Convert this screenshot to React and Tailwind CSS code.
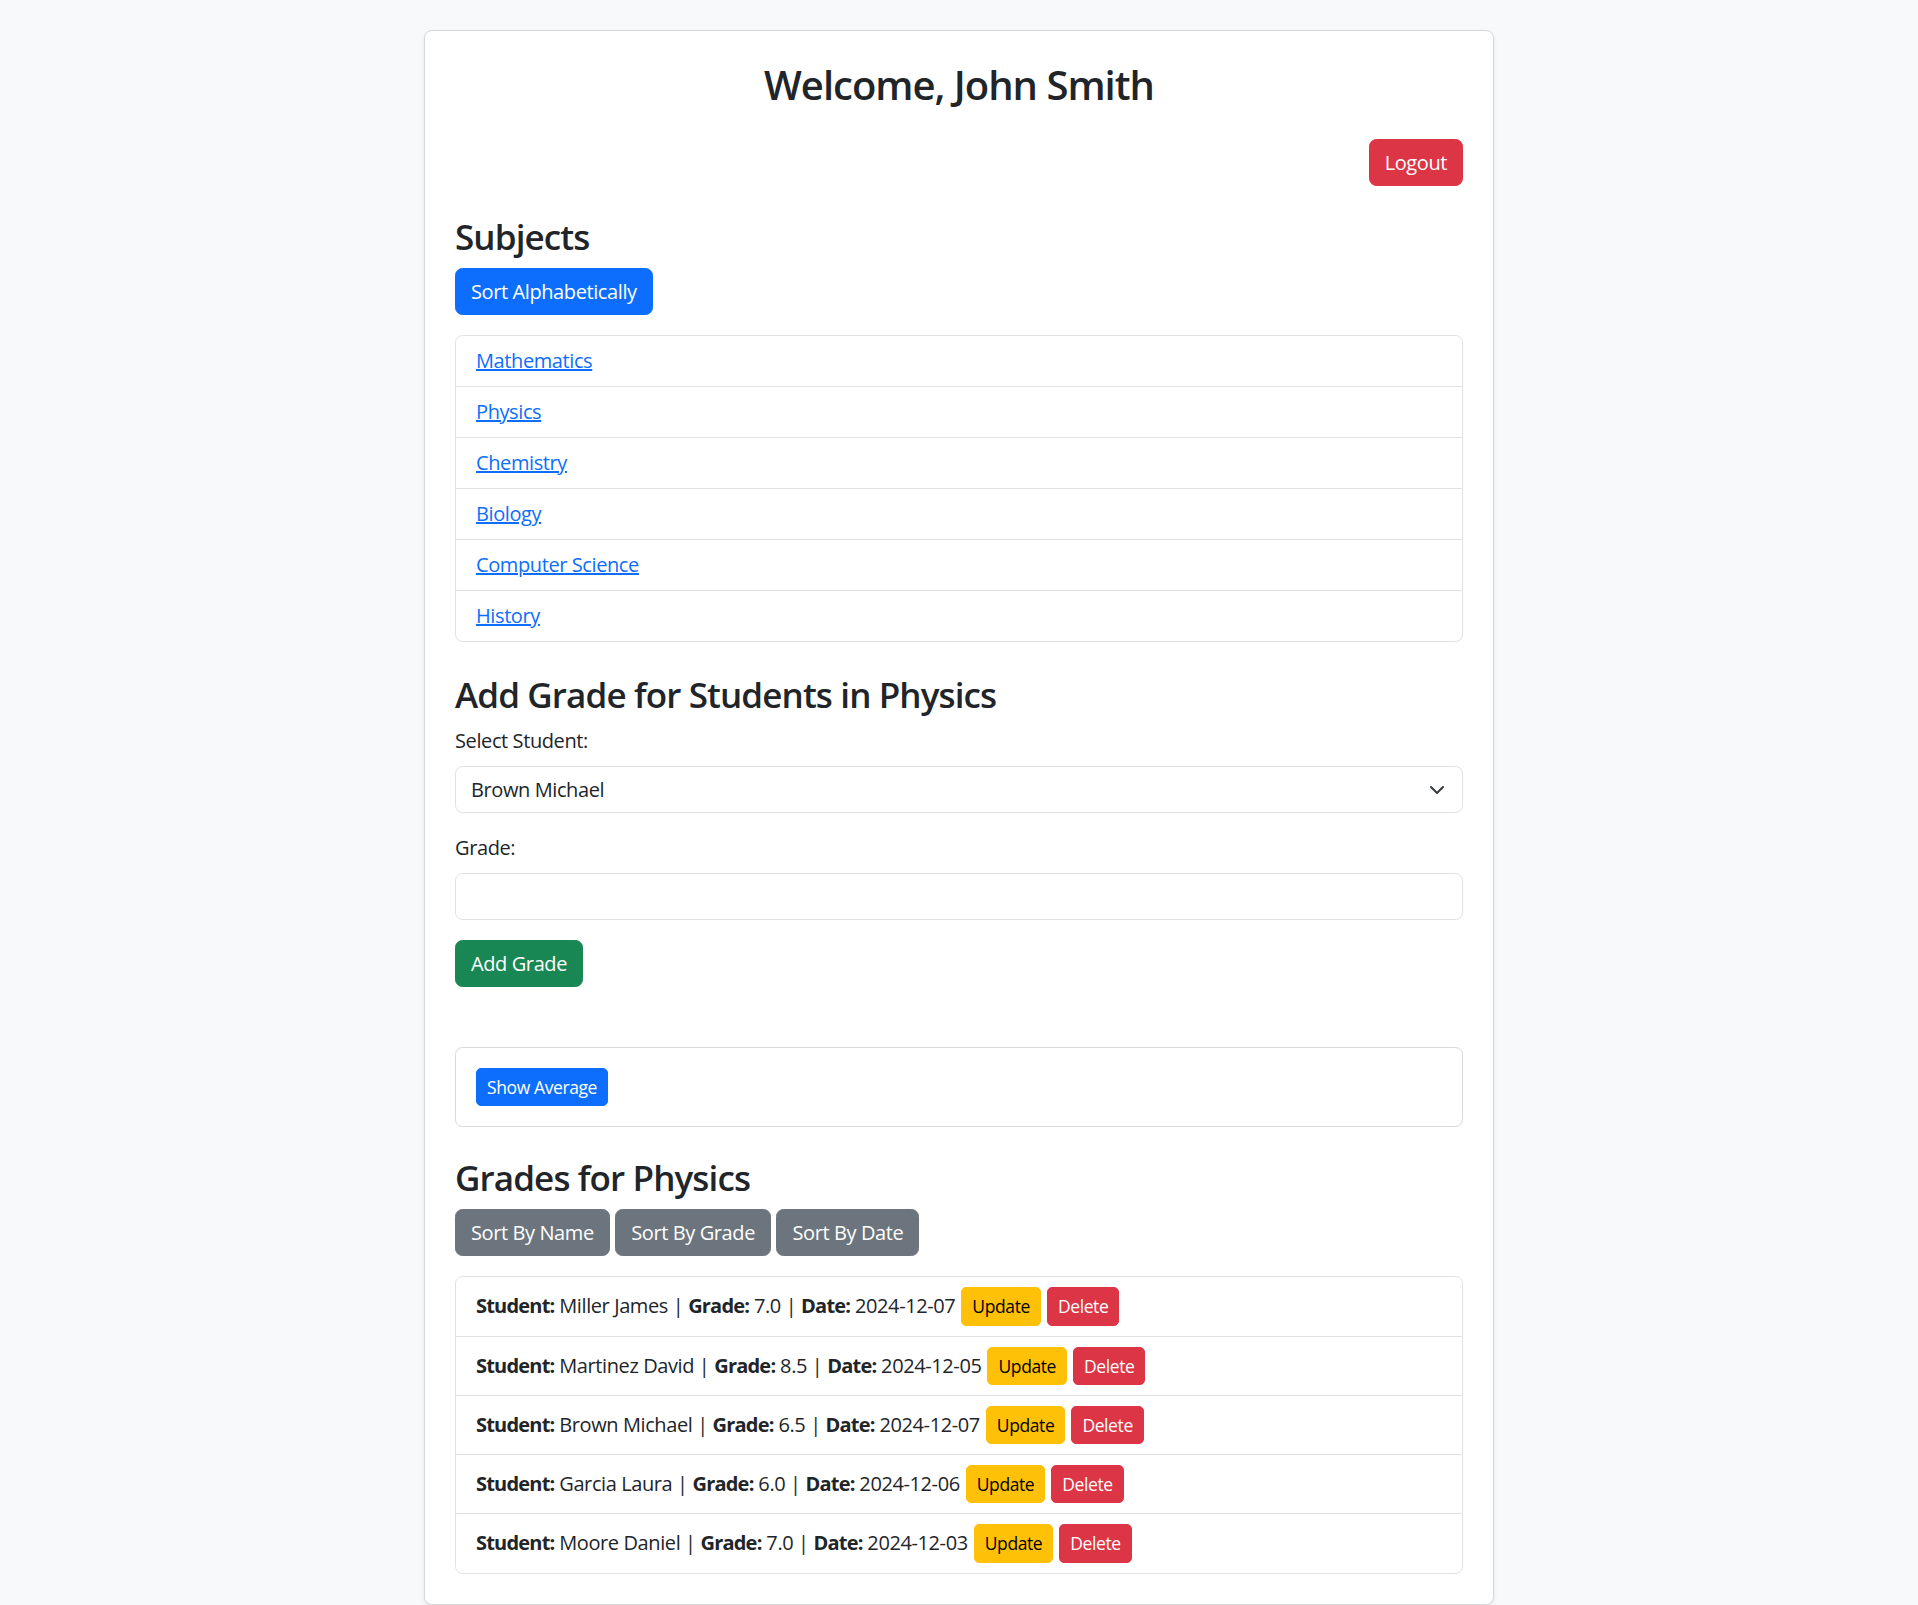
import { useState } from 'react'

const SUBJECTS = ['Mathematics', 'Physics', 'Chemistry', 'Biology', 'Computer Science', 'History']

const GRADES = [
  { student: 'Miller James', grade: '7.0', date: '2024-12-07' },
  { student: 'Martinez David', grade: '8.5', date: '2024-12-05' },
  { student: 'Brown Michael', grade: '6.5', date: '2024-12-07' },
  { student: 'Garcia Laura', grade: '6.0', date: '2024-12-06' },
  { student: 'Moore Daniel', grade: '7.0', date: '2024-12-03' },
]

const STUDENTS = ['Brown Michael', 'Garcia Laura', 'Martinez David', 'Miller James', 'Moore Daniel']

export default function App() {
  const [student, setStudent] = useState('Brown Michael')
  const [grade, setGrade] = useState('')

  return (
    <div className="min-h-screen bg-[#f8f9fa] pt-[30px] font-['Open_Sans',sans-serif] text-[20px] leading-[30px] tracking-[-0.02em] text-[#212529]">
      <div className="w-[1070px] mx-auto bg-white border border-[#d7d8d9] rounded-[8px] p-[30px] shadow-[0_2px_4px_rgba(0,0,0,0.075)]">

        <h2 className="text-[40px] leading-[48px] font-semibold tracking-[-0.025em] text-center mb-[30px]">Welcome, John Smith</h2>

        <div className="flex justify-end">
          <button className="bg-[#dc3545] border border-[#dc3545] text-white px-[15px] py-[7.5px] rounded-[7.5px] leading-[30px]">
            Logout
          </button>
        </div>

        {/* Subjects */}
        <h3 className="mt-[30px] mb-[10px] text-[35px] leading-[42px] font-semibold tracking-[-0.025em]">Subjects</h3>
        <button className="bg-[#0d6efd] border border-[#0d6efd] text-white px-[15px] py-[7.5px] rounded-[7.5px] leading-[30px]">
          Sort Alphabetically
        </button>

        <ul className="mt-[20px] border border-[#dee2e6] rounded-[7.5px]">
          {SUBJECTS.map((s, i) => (
            <li
              key={s}
              className={`px-[20px] py-[10px] leading-[30px] ${i < SUBJECTS.length - 1 ? 'border-b border-[#dee2e6]' : ''}`}
            >
              <a href="#" className="text-[#0d6efd] underline">{s}</a>
            </li>
          ))}
        </ul>

        {/* Add grade form */}
        <h3 className="mt-[32px] mb-[10px] text-[35px] leading-[42px] font-semibold tracking-[-0.025em]">Add Grade for Students in Physics</h3>

        <div className="mb-[20px]">
          <label className="block mb-[10px]">Select Student:</label>
          <div className="relative">
            <select
              value={student}
              onChange={e => setStudent(e.target.value)}
              className="w-full h-[47px] appearance-none bg-white border border-[#dee2e6] rounded-[7.5px] pl-[15px] pr-[45px] leading-[30px] text-[#212529]"
            >
              {STUDENTS.map(s => <option key={s}>{s}</option>)}
            </select>
            <svg
              className="absolute right-[18px] top-1/2 -translate-y-1/2 w-[16px] h-[16px] pointer-events-none"
              viewBox="0 0 16 16"
              fill="none"
              stroke="#343a40"
              strokeWidth="2"
              strokeLinecap="round"
              strokeLinejoin="round"
            >
              <path d="m2 5 6 6 6-6" />
            </svg>
          </div>
        </div>

        <div className="mb-[20px]">
          <label className="block mb-[10px]">Grade:</label>
          <input
            type="text"
            value={grade}
            onChange={e => setGrade(e.target.value)}
            className="w-full h-[47px] bg-white border border-[#dee2e6] rounded-[7.5px] px-[15px] leading-[30px]"
          />
        </div>

        <button className="bg-[#198754] border border-[#198754] text-white px-[15px] py-[7.5px] rounded-[7.5px] leading-[30px]">
          Add Grade
        </button>

        {/* Average */}
        <div className="mt-[60px] border border-[#d7d8d9] rounded-[7.5px] p-[20px]">
          <button className="bg-[#0d6efd] border border-[#0d6efd] text-white text-[17.5px] leading-[26.25px] px-[10px] py-[5px] rounded-[5px]">
            Show Average
          </button>
        </div>

        {/* Grades list */}
        <h3 className="mt-[30px] mb-[10px] text-[35px] leading-[42px] font-semibold tracking-[-0.025em]">Grades for Physics</h3>
        <div className="flex gap-[5.5px]">
          {['Sort By Name', 'Sort By Grade', 'Sort By Date'].map(t => (
            <button key={t} className="bg-[#6c757d] border border-[#6c757d] text-white px-[15px] py-[7.5px] rounded-[7.5px] leading-[30px]">
              {t}
            </button>
          ))}
        </div>

        <ul className="mt-[20px] border border-[#dee2e6] rounded-[7.5px]">
          {GRADES.map((g, i) => (
            <li
              key={i}
              className={`px-[20px] py-[10px] leading-[30px] ${i < GRADES.length - 1 ? 'border-b border-[#dee2e6]' : ''}`}
            >
              <strong className="font-bold tracking-[-0.04em]">Student:</strong> {g.student} | <strong className="font-bold tracking-[-0.04em]">Grade:</strong> {g.grade} | <strong className="font-bold tracking-[-0.04em]">Date:</strong> {g.date}
              <button className="inline-block align-baseline ml-[6px] bg-[#ffc107] border border-[#ffc107] text-black text-[17.5px] leading-[26.25px] px-[10px] py-[5px] rounded-[5px]">
                Update
              </button>
              <button className="inline-block align-baseline ml-[6px] bg-[#dc3545] border border-[#dc3545] text-white text-[17.5px] leading-[26.25px] px-[10px] py-[5px] rounded-[5px]">
                Delete
              </button>
            </li>
          ))}
        </ul>

      </div>
    </div>
  )
}
